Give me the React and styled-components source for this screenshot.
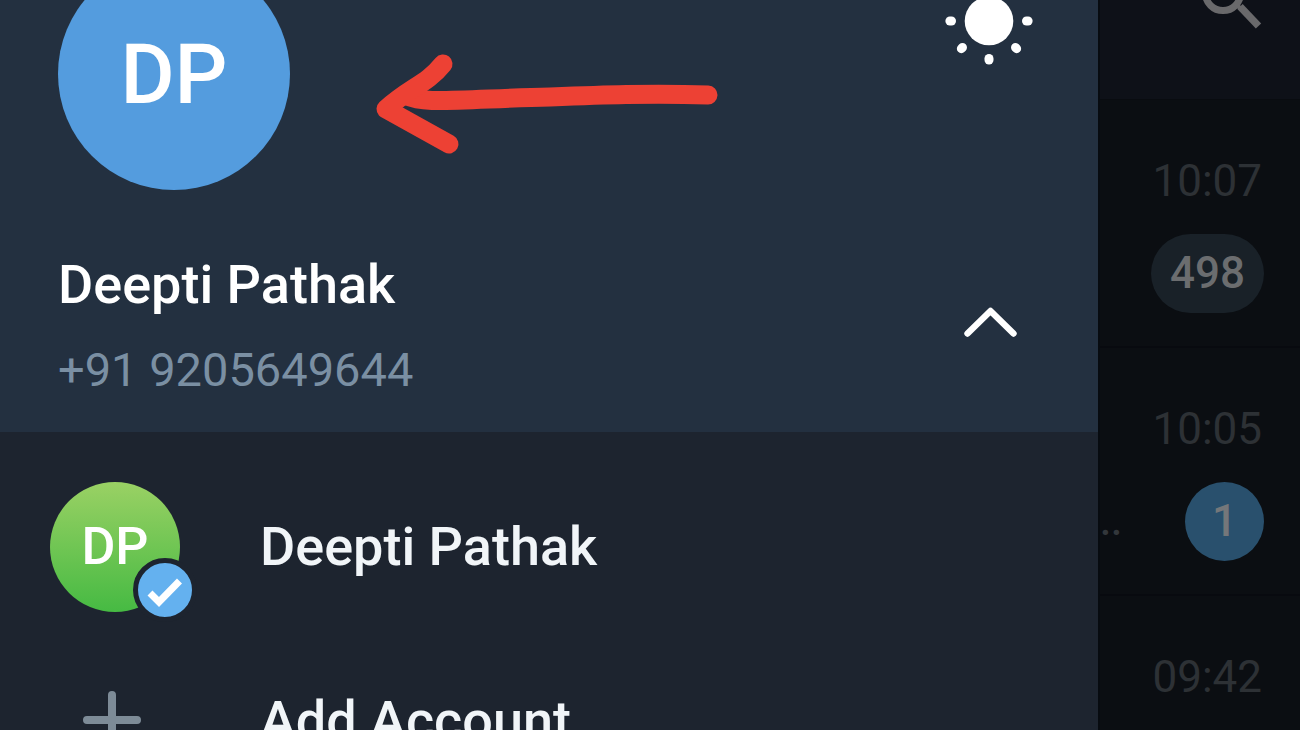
import styled, { createGlobalStyle } from "styled-components"

const GlobalStyle = createGlobalStyle`
    *{
        box-sizing:border-box;
    }
    body{
        margin:0;
        background-color:#0b0e12;
        font-family:Roboto, "Liberation Sans", sans-serif;
    }
`
const Screen = styled.div`
    position:relative;
    display:flex;
    height:100vh;
    overflow:hidden;
`
// both columns are scrolled a little past the top edge
const Drawer = styled.aside`
    flex:1;
    min-width:0;
    margin-top:-42px;
    background-color:#1d242f;
`
const Chats = styled.main`
    flex:0 0 202px;
    margin-top:-42px;
    background-color:#0b0e12;
    border-left:2px solid #070b10;
`
const Profile = styled.header`
    display:flex;
    flex-direction:column;
    gap:63px;
    padding:0 65px 34px 58px;
    background-color:#233040;
`
const ProfileRow = styled.div`
    display:flex;
    justify-content:space-between;
    align-items:${props=>props.$align || "center"};
`
const Avatar = styled.div`
    display:flex;
    align-items:center;
    justify-content:center;
    width:232px;
    height:232px;
    border-radius:50%;
    background-color:#549cde;
    color:white;
    font-size:83px;
    font-weight:500;
`
const SmallAvatar = styled(Avatar)`
    position:relative;
    flex:none;
    width:130px;
    height:130px;
    background:linear-gradient(#9ad164, #46ba43);
    font-size:52px;
`
const Selected = styled.span`
    position:absolute;
    right:-17px;
    bottom:-10px;
    width:64px;
    height:64px;
    border:5px solid #1d242f;
    border-radius:50%;
    background-color:#64b1ef;
    svg{
        display:block;
    }
`
const IconButton = styled.button`
    display:block;
    margin:0;
    padding:0;
    border:0;
    background:none;
    cursor:pointer;
    svg{
        display:block;
    }
`
const ThemeButton = styled(IconButton)`
    margin-top:19px;
`
const Name = styled.h1`
    margin:0 0 25px;
    color:white;
    font-size:54px;
    font-weight:500;
    line-height:64px;
`
const Phone = styled.p`
    margin:0;
    color:#7a8fa3;
    font-size:47px;
    line-height:56px;
`
const Accounts = styled.nav`
    padding-top:28px;
`
const Account = styled.button`
    display:flex;
    align-items:center;
    gap:80px;
    width:100%;
    height:174px;
    padding:0 50px;
    border:0;
    background:none;
    color:#f1f5f8;
    font-family:inherit;
    font-size:54px;
    font-weight:500;
    line-height:64px;
    text-align:left;
    cursor:pointer;
`
const Toolbar = styled.div`
    display:flex;
    justify-content:flex-end;
    height:142px;
    padding-right:28px;
    background-color:#0e1118;
    border-bottom:1px solid #090c10;
`
const Chat = styled.article`
    display:flex;
    flex-direction:column;
    gap:27px;
    height:248px;
    padding:55px 36px 0 0;
    border-bottom:2px solid #080a0f;
`
const Time = styled.time`
    padding-right:2px;
    color:#2d3135;
    font-size:44px;
    line-height:52px;
    text-align:right;
`
const ChatBottom = styled.div`
    display:flex;
    align-items:center;
    justify-content:space-between;
`
const Preview = styled.span`
    color:#33373b;
    font-size:40px;
    font-weight:500;
    line-height:48px;
`
const Badge = styled.span`
    min-width:79px;
    padding:0 19px;
    border-radius:40px;
    background-color:${props=>props.$unmuted ? "#29506d" : "#192128"};
    color:${props=>props.$unmuted ? "#74777a" : "#6b6d6f"};
    font-size:44px;
    font-weight:500;
    line-height:79px;
    text-align:center;
`
const Arrow = styled.svg`
    position:absolute;
    left:360px;
    top:40px;
    pointer-events:none;
`

const chats = [
    { time: "10:07", preview: "", count: 498, unmuted: false },
    { time: "10:05", preview: "..", count: 1, unmuted: true },
    { time: "09:42", preview: "", count: null, unmuted: false },
]

function SunIcon()
{
    return(
        <svg width="88" height="88" viewBox="-44 -44 88 88" fill="white">
            <circle r="24.3"/>
            {[0, 45, 90, 135, 180, 225, 270, 315].map(angle=>(
                <rect key={angle} x="33" y="-4.5" width="10.6" height="9" rx="4.5" transform={`rotate(${angle})`}/>
            ))}
        </svg>
    )
}

function PlusIcon()
{
    return(
        <svg width="130" height="130" viewBox="0 0 130 130" fill="none" stroke="#7d8b97" strokeWidth="8" strokeLinecap="round">
            <path d="M37 64H87M62 39V89"/>
        </svg>
    )
}

export default function App()
{
    return(
        <>
            <GlobalStyle/>
            <Screen>
                <Drawer>
                    <Profile>
                        <ProfileRow $align="flex-start">
                            <Avatar>DP</Avatar>
                            <ThemeButton aria-label="Switch theme">
                                <SunIcon/>
                            </ThemeButton>
                        </ProfileRow>
                        <ProfileRow>
                            <div>
                                <Name>Deepti Pathak</Name>
                                <Phone>+91 9205649644</Phone>
                            </div>
                            <IconButton aria-label="Hide accounts">
                                <svg width="88" height="88" viewBox="0 0 88 88" fill="none" stroke="white" strokeWidth="6.4" strokeLinecap="round" strokeLinejoin="round">
                                    <path d="M22.5 51.5L45.5 29L68.5 51.5"/>
                                </svg>
                            </IconButton>
                        </ProfileRow>
                    </Profile>
                    <Accounts>
                        <Account>
                            <SmallAvatar as="span">
                                DP
                                <Selected>
                                    <svg width="54" height="54" viewBox="0 0 54 54" fill="none" stroke="white" strokeWidth="7">
                                        <path d="M12 30L21 39L41.5 18"/>
                                    </svg>
                                </Selected>
                            </SmallAvatar>
                            Deepti Pathak
                        </Account>
                        <Account>
                            <PlusIcon/>
                            Add Account
                        </Account>
                    </Accounts>
                </Drawer>
                <Chats>
                    <Toolbar>
                        <IconButton aria-label="Search">
                            <svg width="80" height="140" viewBox="0 0 80 140" fill="none" stroke="#69696b">
                                <circle cx="31" cy="34" r="17.6" strokeWidth="7"/>
                                <path d="M43 44L50 51" strokeWidth="4"/>
                                <path d="M48 47.5L66.5 67" strokeWidth="7.4"/>
                            </svg>
                        </IconButton>
                    </Toolbar>
                    {chats.map(chat=>(
                        <Chat key={chat.time}>
                            <Time>{chat.time}</Time>
                            <ChatBottom>
                                <Preview>{chat.preview}</Preview>
                                {chat.count && <Badge $unmuted={chat.unmuted}>{chat.count}</Badge>}
                            </ChatBottom>
                        </Chat>
                    ))}
                </Chats>
                <Arrow width="380" height="130" viewBox="0 0 380 130" fill="none" stroke="#ed4134" strokeWidth="19" strokeLinecap="round" strokeLinejoin="round">
                    <path d="M348 55C290 53 240 55 190 57C140 58 100 61 72 60.5C62 60 54 59 46 55.5"/>
                    <path d="M83 24C66 45 50 47 26 69L89 104"/>
                </Arrow>
            </Screen>
        </>
    )
}
